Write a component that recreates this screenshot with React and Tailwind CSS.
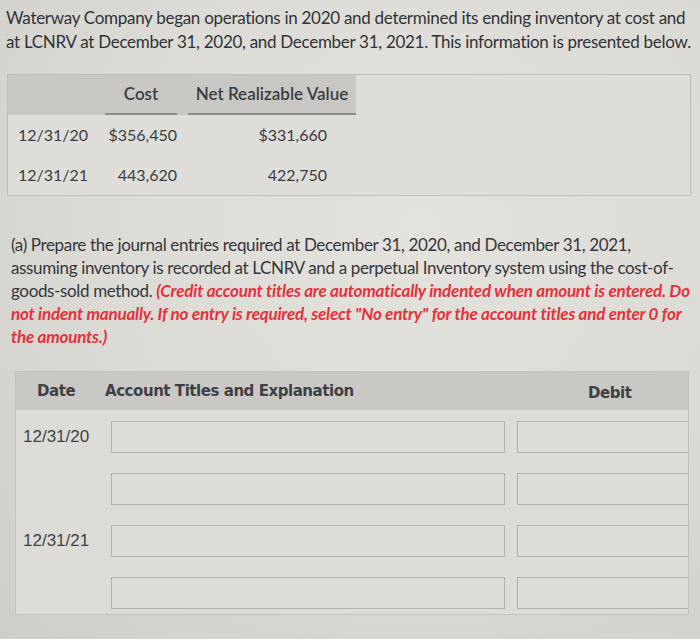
const lato = { fontFamily: 'Lato, "Open Sans", sans-serif' };

function InventoryTable() {
    const rows = [
        { date: '12/31/20', cost: '$356,450', nrv: '$331,660' },
        { date: '12/31/21', cost: '443,620', nrv: '422,750' },
    ];

    return (
        <div className="ml-[7px] mr-[9px] mt-[20px] border border-[#bfbdb8] bg-[#dfddd8] text-[#3a3e43]">
            <div className="flex h-[40px] w-[348px] bg-[#c8c7c3]">
                <div className="w-[97px]" />
                <div className="flex w-[72px] items-center justify-center border-b-2 border-[#8e8d89] text-[17px] font-semibold">
                    Cost
                </div>
                <div className="w-[11px]" />
                <div className="flex w-[168px] items-center justify-center border-b-2 border-[#8e8d89] text-[17px] font-semibold">
                    Net Realizable Value
                </div>
            </div>
            {rows.map((row) => (
                <div key={row.date} className="flex h-[40px] items-center text-[16px]">
                    <div className="w-[97px] pl-[10px]">{row.date}</div>
                    <div className="w-[72px] text-right">{row.cost}</div>
                    <div className="w-[11px]" />
                    <div className="w-[168px] pr-[29px] text-right">{row.nrv}</div>
                </div>
            ))}
        </div>
    );
}

function JournalTable() {
    const lines = [
        { date: '12/31/20' },
        { date: '' },
        { date: '12/31/21' },
        { date: '' },
    ];

    return (
        <div className="ml-[15px] mt-[23px] w-[674px] overflow-hidden border border-[#c3c1bc] bg-[#dddbd6]">
            <div
                className="flex h-[38px] items-center bg-[#c9c8c4] text-[15px] font-bold tracking-[-0.03em] text-[#3d4146]"
                style={{ fontFamily: '"DejaVu Sans", Verdana, sans-serif' }}
            >
                <div className="w-[89px] shrink-0 pl-[21px]">Date</div>
                <div className="w-[483px] shrink-0">Account Titles and Explanation</div>
                <div className="pt-[4px]">Debit</div>
            </div>
            <div className="flex flex-col gap-[20px] pb-[5px] pt-[11px]">
                {lines.map((line, i) => (
                    <div key={i} className="flex items-center">
                        <div
                            className="w-[95px] shrink-0 pl-[7px] text-[17px] text-[#3f4348]"
                            style={{ fontFamily: '"Liberation Sans", Arial, sans-serif' }}
                        >
                            {line.date}
                        </div>
                        <div className="h-[32px] w-[394px] shrink-0 border border-[#b3b1ad] bg-[#dfddd8]" />
                        <div className="ml-[12px] h-[32px] w-[190px] shrink-0 border border-[#b3b1ad] bg-[#dfddd8]" />
                    </div>
                ))}
            </div>
        </div>
    );
}

export default function App() {
    return (
        <div
            className="flex h-[641px] w-[700px] flex-col overflow-hidden bg-[radial-gradient(ellipse_at_60%_35%,#e4e2dd_0%,#dcdad5_55%,#cfcdc8_100%)]"
            style={lato}
        >
            <p className="pl-[6px] pt-[6px] text-[17px] leading-[24px] tracking-[-0.017em] text-[#2f3338] whitespace-nowrap">
                Waterway Company began operations in 2020 and determined its ending inventory at cost and
                <br />
                at LCNRV at December 31, 2020, and December 31, 2021. This information is presented below.
            </p>

            <InventoryTable />

            <p className="mt-[37px] pl-[11px] text-[17px] leading-[23px] tracking-[-0.021em] text-[#33373c] whitespace-nowrap">
                (a) Prepare the journal entries required at December 31, 2020, and December 31, 2021,
                <br />
                assuming inventory is recorded at LCNRV and a perpetual Inventory system using the cost-of-
                <br />
                goods-sold method.{' '}
                <span className="font-bold italic tracking-[-0.012em] text-[#e5323d]">
                    (Credit account titles are automatically indented when amount is entered. Do
                    <br />
                    not indent manually. If no entry is required, select "No entry" for the account titles and enter 0 for
                    <br />
                    the amounts.)
                </span>
            </p>

            <JournalTable />

            <div className="mt-auto h-[2px] bg-white" />
        </div>
    );
}
